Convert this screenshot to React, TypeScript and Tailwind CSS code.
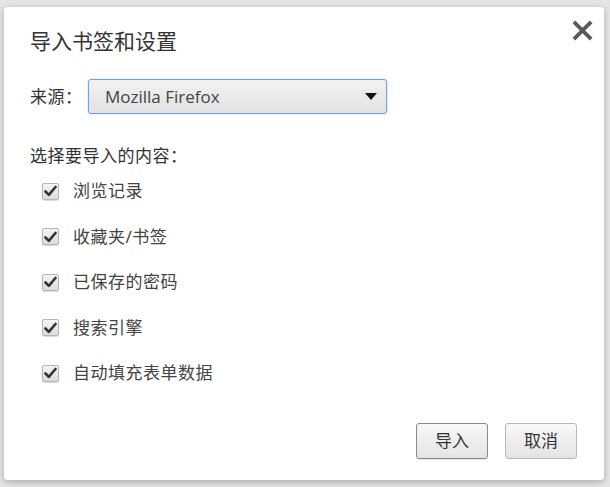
import React from "react";

const items = ["浏览记录", "收藏夹/书签", "已保存的密码", "搜索引擎", "自动填充表单数据"];

function Check() {
  return (
    <span className="w-[17px] h-[17px] rounded-[2px] border border-[#b5b5b5] bg-gradient-to-b from-[#f4f4f4] to-[#dcdcdc] shadow-[0_1px_1px_rgba(0,0,0,0.15)] flex items-center justify-center">
      <svg width="13" height="12" viewBox="0 0 13 12">
        <path d="M1.5 6.5 L4.8 9.8 L11.5 2" fill="none" stroke="#333" strokeWidth="2.6" strokeLinecap="round" strokeLinejoin="round" />
      </svg>
    </span>
  );
}

export default function App() {
  return (
    <div
      className="w-[610px] h-[487px] bg-[#e4e4e4] pt-[7px] pl-[4px] overflow-hidden"
      style={{ fontFamily: '"Noto Sans", "Noto Sans CJK SC", sans-serif' }}
    >
      <div className="w-[600px] h-[473px] bg-white rounded-[4px] shadow-[0_2px_6px_rgba(0,0,0,0.25)] flex flex-col text-[#333]">
        <div className="flex items-start justify-between pl-[26px] pr-[10px] pt-[19px]">
          <div className="text-[21px] leading-[30px] text-[#333]">导入书签和设置</div>
          <svg width="23" height="23" viewBox="0 0 24 24" className="mt-[-7px]">
            <path d="M3 3 L21 21 M21 3 L3 21" stroke="#5a5a5a" strokeWidth="4" />
          </svg>
        </div>
        <div className="flex items-center pl-[26px] mt-[23px]">
          <span className="text-[17px] tracking-[0.5px] text-[#333] w-[58px]">来源：</span>
          <div className="w-[299px] h-[35px] rounded-[3px] border border-[#6ea0f0] bg-gradient-to-b from-[#f2f2f2] to-[#e2e2e2] flex items-center justify-between pl-[16px] pr-[9px] shadow-[0_0_2px_rgba(80,140,240,0.4)]">
            <span className="text-[17px] text-[#444]" style={{ fontFamily: '"Open Sans", sans-serif' }}>Mozilla Firefox</span>
            <svg width="12" height="7" viewBox="0 0 12 7">
              <path d="M0 0 L12 0 L6 7 Z" fill="#111" />
            </svg>
          </div>
        </div>
        <div className="pl-[26px] mt-[31px] text-[17px] tracking-[0.5px] leading-[22px]">选择要导入的内容：</div>
        <div className="flex flex-col pl-[38px] mt-[14px] gap-[25.5px]">
          {items.map((t) => (
            <div key={t} className="flex items-center h-[20px] gap-[14px]">
              <Check />
              <span className="text-[17px] tracking-[0.5px] text-[#444]">{t}</span>
            </div>
          ))}
        </div>
        <div className="flex justify-end gap-[17px] pr-[27px] mt-[40px]">
          <button className="w-[72px] h-[36px] rounded-[3px] border border-[#8a8a8a] bg-gradient-to-b from-[#f8f8f8] to-[#e4e4e4] text-[17px] text-[#333] shadow-[0_1px_1px_rgba(0,0,0,0.1)]">导入</button>
          <button className="w-[72px] h-[36px] rounded-[3px] border border-[#b8b8b8] bg-gradient-to-b from-[#f8f8f8] to-[#e4e4e4] text-[17px] text-[#333]">取消</button>
        </div>
      </div>
    </div>
  );
}
